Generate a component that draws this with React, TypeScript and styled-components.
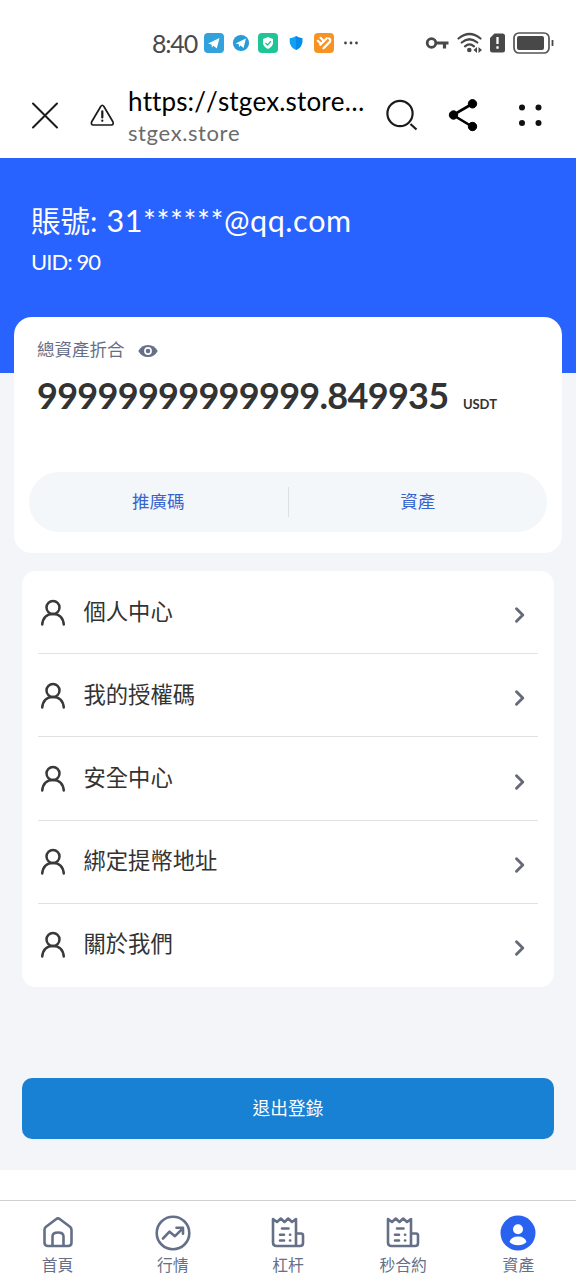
import React from "react";
import styled, { createGlobalStyle } from "styled-components";

const GlobalStyle = createGlobalStyle`
  * { box-sizing: border-box; }
  body { margin: 0; background: #fff; font-family: Lato, "Noto Sans CJK TC", sans-serif; font-kerning: none; color: #333; }
  svg { display: block; flex: none; }
`;

const Screen = styled.div`
  width: 576px;
  height: 1280px;
  display: flex;
  flex-direction: column;
  overflow: hidden;
  background: #fff;
`;

const StatusBar = styled.header`
  height: 84px;
  padding: 1px 22px 0 152px;
  display: flex;
  align-items: center;
  justify-content: space-between;
`;

const StatusGroup = styled.div<{ $gap: number }>`
  display: flex;
  align-items: center;
  gap: ${(p) => p.$gap}px;
`;

const Clock = styled.span`
  width: 44px;
  font-size: 25px;
  line-height: 30px;
  letter-spacing: -1.2px;
  color: #484848;
  white-space: nowrap;
`;

const BrowserBar = styled.div`
  height: 74px;
  padding: 0 31px 0 30px;
  display: flex;
  align-items: flex-start;
`;

const BarIcon = styled.span<{ $left?: number; $top: number }>`
  margin: ${(p) => p.$top}px 0 0 ${(p) => p.$left ?? 0}px;
`;

const Address = styled.div`
  width: 240px;
  margin-left: 13px;
  display: flex;
  flex-direction: column;
  white-space: nowrap;
`;

const Url = styled.span`
  font-size: 26px;
  line-height: 32px;
  margin-top: 1px;
  letter-spacing: 0.12px;
  color: #000;
`;

const Domain = styled.span`
  font-size: 22px;
  line-height: 28px;
  margin-top: 2px;
  letter-spacing: 0.55px;
  color: #6b6b6b;
`;

const Page = styled.main`
  height: 1012px;
  background: #f3f5f9;
  display: flex;
  flex-direction: column;
`;

const Hero = styled.section`
  height: 215px;
  flex: none;
  padding: 42px 31px 0;
  background: #2862ff;
  color: #fff;
`;

const Account = styled.div`
  font-size: 29.5px;
  line-height: 40px;
  white-space: nowrap;
`;

const AccountName = styled.span`
  margin-left: 1.5px;
  font-size: 30.5px;
  letter-spacing: 0.55px;
`;

const Uid = styled.div`
  margin-top: 6px;
  font-size: 22px;
  line-height: 30px;
  letter-spacing: -0.95px;
`;

const BalanceCard = styled.section`
  height: 236px;
  flex: none;
  margin: -56px 14px 0;
  padding: 20px 15px 21px;
  border-radius: 18px;
  background: #fff;
  display: flex;
  flex-direction: column;
`;

const BalanceLabel = styled.div`
  display: flex;
  align-items: center;
  gap: 13px;
  padding-left: 8px;
  font-size: 17.5px;
  line-height: 26px;
  color: #666f88;
  svg { margin-top: 2px; }
`;

const Balance = styled.div`
  display: flex;
  align-items: baseline;
  padding-left: 8px;
  margin-top: 10px;
  white-space: nowrap;
`;

const Amount = styled.strong`
  width: 426px;
  font-size: 36px;
  line-height: 44px;
  font-weight: 700;
  letter-spacing: -0.7px;
`;

const Unit = styled.span`
  font-size: 13px;
  font-weight: 700;
  letter-spacing: -0.1px;
`;

const Shortcuts = styled.div`
  height: 60px;
  margin-top: auto;
  border-radius: 30px;
  background: #f4f7fa;
  display: flex;
  align-items: center;
`;

const Shortcut = styled.button`
  flex: 1;
  padding: 0;
  border: 0;
  background: none;
  font: inherit;
  font-size: 17.5px;
  line-height: 26px;
  color: #3763cf;
`;

const Separator = styled.span`
  width: 1px;
  height: 30px;
  background: #dcdfe6;
`;

const Menu = styled.nav`
  height: 416px;
  flex: none;
  margin: 18px 22px 0;
  padding: 0 16px;
  border-radius: 14px;
  background: #fff;
  display: flex;
  flex-direction: column;
`;

const MenuRow = styled.div`
  flex: 1;
  padding-right: 11px;
  display: flex;
  align-items: center;
  & + & { box-shadow: 0 -1px 0 #e2e2e4; }
`;

const MenuText = styled.span`
  flex: 1;
  margin: -2px 0 0 15.5px;
  font-size: 22.3px;
  line-height: 32px;
`;

const Logout = styled.button`
  height: 61px;
  flex: none;
  margin: 91px 22px 0;
  padding: 0 0 4px;
  border: 0;
  border-radius: 10px;
  background: #1881d4;
  color: #fff;
  font: inherit;
  font-size: 17.7px;
`;

const TabBar = styled.nav`
  height: 80px;
  margin-top: 30px;
  border-top: 1px solid #d0d1d5;
  display: flex;
`;

const Tab = styled.div`
  flex: 1;
  padding-top: 12.5px;
  display: flex;
  flex-direction: column;
  align-items: center;
  color: #666f88;
`;

const TabLabel = styled.span`
  margin-top: 1.5px;
  font-size: 15.8px;
  line-height: 23px;
`;

const plane = "M4 10.5 15.5 5 12.8 15.5 9.5 12.8 8 14.5 7.5 11.5Z";

const AppBadges = () => (
  <StatusGroup $gap={8}>
    <svg width="20" height="20" viewBox="0 0 20 20">
      <rect width="20" height="20" rx="4" fill="#32a2dc" />
      <path d={plane} fill="#fff" />
    </svg>
    <svg width="18" height="18" viewBox="0 0 20 20">
      <circle cx="10" cy="10" r="9" fill="#299cd6" />
      <path d={plane} fill="#fff" />
    </svg>
    <svg width="20" height="20" viewBox="0 0 20 20">
      <rect width="20" height="20" rx="4" fill="#1fc596" />
      <path d="M10 4 15 6V10.5Q14 14 10 16 6 14 5 10.5V6Z" fill="#fff" />
      <path d="m7.5 10 2 2 3.5-3.7" fill="none" stroke="#1fc596" strokeWidth="1.3" />
    </svg>
    <svg width="20" height="16" viewBox="0 0 19 16">
      <path d="M9.5 1Q12 3 15.8 3.3V7Q15.5 12 9.5 15 3.5 12 3.2 7V3.3Q7 3 9.5 1Z" fill="#12a0f3" />
      <path d="M9.5 1Q12 3 15.8 3.3V7Q15.5 12 9.5 15Z" fill="#078bea" />
    </svg>
    <svg width="20" height="20" viewBox="0 0 20 20">
      <rect width="20" height="20" rx="4" fill="#f89322" />
      <g fill="none" stroke="#fff" strokeWidth="2.2" strokeLinecap="round" strokeLinejoin="round">
        <path d="M3.8 7.8 6.8 10.6M6.5 4.8 10 8.2" />
        <path d="M12.8 5.2 6.3 11.8" />
        <path d="m9.5 15.2 6.300-6.300Q17 6.500 15 5.500" />
      </g>
    </svg>
    <svg width="16" height="6" viewBox="0 0 16 6">
      <g fill="#444"><circle cx="3.5" cy="3" r="1.400" /><circle cx="9" cy="3" r="1.400" /><circle cx="14.500" cy="3" r="1.400" /></g>
    </svg>
  </StatusGroup>
);

const SystemIcons = () => (
  <StatusGroup $gap={8}>
    <svg width="24" height="16" viewBox="0 0 24 16">
      <circle cx="6.500" cy="8" r="4.300" fill="none" stroke="#484848" strokeWidth="2.800" />
      <path d="M11 8h12.500M19.500 8v5.500" fill="none" stroke="#484848" strokeWidth="3.200" />
    </svg>
    <svg width="25" height="22" viewBox="0 0 25 22">
      <g fill="none" stroke="#484848" strokeWidth="2.200" strokeLinecap="round">
        <path d="M1.500 6.500Q12.500-2.500 23.500 6.500" />
        <path d="M4.700 10.500Q12.500 4 20.300 10.500" />
        <path d="M8 14.300Q12.500 10.500 17 14.300" />
      </g>
      <circle cx="12.300" cy="18" r="2.300" fill="#484848" />
      <path d="m20 15-3.500 3 3.500 3ZM21.500 15l3.500 3-3.500 3Z" fill="#484848" />
    </svg>
    <svg width="15" height="20" viewBox="0 0 15 20">
      <path d="M4.500.5H12.500Q15 .5 15 3V17Q15 19.500 12.500 19.500H2.500Q0 19.500 0 17V5Z" fill="#484848" />
      <path d="M7.500 4v7M7.500 13.200v2.600" stroke="#fff" strokeWidth="2.300" />
    </svg>
    <svg width="41" height="22" viewBox="0 0 41 22">
      <rect x="1" y="1" width="35" height="20" rx="5" fill="none" stroke="#555" strokeWidth="1.700" />
      <rect x="4" y="4" width="27" height="14" rx="2" fill="#484848" />
      <path d="M39.500 8v6" stroke="#484848" strokeWidth="1.800" />
    </svg>
  </StatusGroup>
);

const EyeIcon = () => (
  <svg width="20" height="14" viewBox="0 0 20 14">
    <path d="M.3 7Q3.500 1 10 1t9.700 6Q16.500 13 10 13T.3 7Z" fill="#666f88" />
    <circle cx="10" cy="7" r="3.100" fill="#666f88" stroke="#fff" strokeWidth="1.600" />
  </svg>
);

const PersonIcon = () => (
  <svg width="30" height="30" viewBox="0 0 30 30" fill="none" stroke="#393939" strokeWidth="2.500" strokeLinecap="round">
    <circle cx="15" cy="9.500" r="6.500" />
    <path d="M4.200 26.500C5 19.500 9.200 16 15 16s10 3.500 10.800 10.500" />
  </svg>
);

const Chevron = styled.svg`
  margin-top: 5px;
`;

const ChevronIcon = () => (
  <Chevron width="14" height="18" viewBox="0 0 14 18">
    <path d="m3.500 2.800 6.300 6.200-6.300 6.200" fill="none" stroke="#666a78" strokeWidth="2.900" strokeLinecap="round" strokeLinejoin="round" />
  </Chevron>
);

const line = { fill: "none", stroke: "currentColor", strokeWidth: 2.6, strokeLinecap: "round", strokeLinejoin: "round" } as const;

const HomeIcon = () => (
  <svg width="38" height="38" viewBox="0 0 38 38" {...line}>
    <path d="M5.500 16Q5.500 14 7 12.800L17 5.200Q19 3.700 21 5.200l10 7.600Q32.500 14 32.500 16V28.500Q32.500 32 29 32H9Q5.500 32 5.500 28.500Z" />
    <path d="M13.500 31V22.500Q13.500 18.500 19 18.500T24.500 22.500V31" />
  </svg>
);

const TrendIcon = () => (
  <svg width="38" height="38" viewBox="0 0 38 38" {...line}>
    <circle cx="19" cy="19" r="16.300" />
    <path d="m9 24.500 6.500-6.800 5.500 4.500 8-8M22.500 13.800H29v6" />
  </svg>
);

const BillIcon = () => (
  <svg width="38" height="38" viewBox="0 0 38 38" {...line}>
    <path d="M27 32H7.500Q4 32 4 28.500V5l4 3 3.800-3.500L15.500 8l3.700-3.500L23 8l4-3V32h4Q34 32 34 29V21.500Q34 19.500 32 19.500H27" />
    <path d="M13 14.500h6.500M11 20.700h4M11 26.500h4M21 20.700h.2M21 26.500h.2" />
  </svg>
);

const ProfileIcon = () => (
  <svg width="38" height="38" viewBox="0 0 38 38">
    <circle cx="19" cy="19" r="17.500" fill="#2862ef" />
    <circle cx="19" cy="15.200" r="5" fill="#fff" />
    <path d="M10.500 28Q12 22.500 19 22.500T27.500 28Q24 31.300 19 31.300T10.500 28Z" fill="#fff" />
  </svg>
);

const menuItems = ["個人中心", "我的授權碼", "安全中心", "綁定提幣地址", "關於我們"];

const tabs = [
  { label: "首頁", Icon: HomeIcon },
  { label: "行情", Icon: TrendIcon },
  { label: "杠杆", Icon: BillIcon },
  { label: "秒合約", Icon: BillIcon },
  { label: "資產", Icon: ProfileIcon },
];

export default function App() {
  return (
    <Screen>
      <GlobalStyle />
      <StatusBar>
        <StatusGroup $gap={8}>
          <Clock>8:40</Clock>
          <AppBadges />
        </StatusGroup>
        <SystemIcons />
      </StatusBar>
      <BrowserBar>
        <BarIcon $top={16}>
          <svg width="30" height="30" viewBox="0 0 30 30" fill="none" stroke="#1b1b1b" strokeWidth="2" strokeLinecap="round">
            <path d="M3 3.500 27 27.500M27 3.500 3 27.500" />
          </svg>
        </BarIcon>
        <BarIcon $left={30} $top={19}>
          <svg width="25" height="24" viewBox="0 0 25 24" fill="none" stroke="#1b1b1b" strokeWidth="1.700" strokeLinecap="round" strokeLinejoin="round">
            <path d="M10.700 3.500Q12.300 1 13.900 3.500l9 15.300Q24 22 21.300 22H3.300Q.6 22 1.700 18.800Z" />
            <path d="M12.300 8.300v6.200M12.300 17.500v.3" strokeWidth="2.200" />
          </svg>
        </BarIcon>
        <Address>
          <Url>https://stgex.store…</Url>
          <Domain>stgex.store</Domain>
        </Address>
        <BarIcon $left={18} $top={14}>
          <svg width="34" height="34" viewBox="0 0 34 34" fill="none" stroke="#1b1b1b" strokeWidth="2.200">
            <circle cx="15" cy="15.500" r="12.600" />
            <path d="m25.500 26 6 5.500" />
          </svg>
        </BarIcon>
        <BarIcon $left={28} $top={14}>
          <svg width="34" height="34" viewBox="0 0 34 34" fill="#000" stroke="#000">
            <path d="M25 6 6 17 25 28.500" fill="none" strokeWidth="2.600" />
            <circle cx="25.500" cy="5.800" r="4.200" /><circle cx="6.500" cy="17" r="4.200" /><circle cx="25.500" cy="28.500" r="4.200" />
          </svg>
        </BarIcon>
        <BarIcon $left={36} $top={18}>
          <svg width="28" height="26" viewBox="0 0 28 26" fill="#111">
            <circle cx="5" cy="5.500" r="3" /><circle cx="21.500" cy="5.500" r="3" /><circle cx="5" cy="21" r="3" /><circle cx="21.500" cy="21" r="3" />
          </svg>
        </BarIcon>
      </BrowserBar>
      <Page>
        <Hero>
          <Account>賬號: <AccountName>31******@qq.com</AccountName></Account>
          <Uid>UID: 90</Uid>
        </Hero>
        <BalanceCard>
          <BalanceLabel>總資產折合<EyeIcon /></BalanceLabel>
          <Balance>
            <Amount>99999999999999.849935</Amount>
            <Unit>USDT</Unit>
          </Balance>
          <Shortcuts>
            <Shortcut>推廣碼</Shortcut>
            <Separator />
            <Shortcut>資產</Shortcut>
          </Shortcuts>
        </BalanceCard>
        <Menu>
          {menuItems.map((label) => (
            <MenuRow key={label}>
              <PersonIcon />
              <MenuText>{label}</MenuText>
              <ChevronIcon />
            </MenuRow>
          ))}
        </Menu>
        <Logout>退出登錄</Logout>
      </Page>
      <TabBar>
        {tabs.map(({ label, Icon }) => (
          <Tab key={label}>
            <Icon />
            <TabLabel>{label}</TabLabel>
          </Tab>
        ))}
      </TabBar>
    </Screen>
  );
}
